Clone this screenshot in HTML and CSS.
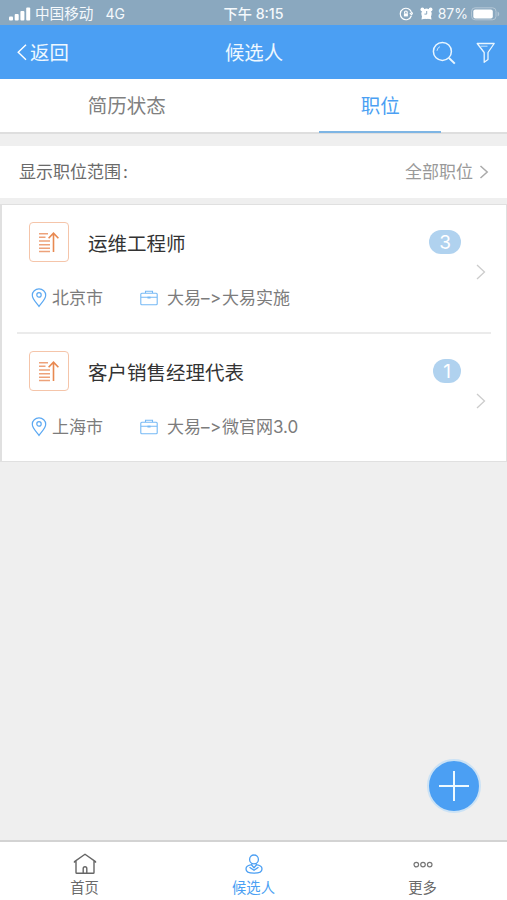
FILE: index.html
```html
<!DOCTYPE html>
<html lang="zh-CN">
<head>
<meta charset="utf-8">
<meta name="viewport" content="width=device-width, initial-scale=1">
<title>候选人</title>
<link rel="stylesheet" href="styles.css">
</head>
<body>
<div class="app">
  <div class="status">
    <div class="status-left">
      <svg class="signal" width="22" height="14" viewBox="0 0 22 14" fill="#fff"><rect x="0" y="9.5" width="4" height="4" rx="1"/><rect x="5.7" y="7" width="4" height="6.5" rx="1"/><rect x="11.4" y="4" width="4" height="9.5" rx="1"/><rect x="17.2" y="0.5" width="4" height="13" rx="1"/></svg>
      <span class="carrier">中国移动</span><span class="network">4G</span>
    </div>
    <div class="status-time">下午 8:15</div>
    <div class="status-right">
      <svg width="14" height="14" viewBox="0 0 14 14" fill="none" stroke="#fff" stroke-width="1.2"><path d="M12.4 8.8A5.7 5.7 0 1 1 12.6 6M10.8 6.2l1.9 1.4 1-2"/><rect x="4.9" y="6.4" width="4" height="3" fill="#fff" stroke="none"/><path d="M5.6 6.5V5.3a1.3 1.3 0 0 1 2.6 0v1.2"/></svg>
      <svg class="alarm" width="13" height="13" viewBox="0 0 13 13"><g fill="#fff"><circle cx="6.5" cy="6.7" r="5.2"/><circle cx="2.4" cy="2.4" r="1.9"/><circle cx="10.6" cy="2.4" r="1.9"/><path d="M1.5 12.6l.6-4 3.4 3zM11.5 12.6l-.6-4-3.4 3z"/></g><path d="M6.7 4v3.1H4.4" fill="none" stroke="#8aa8bf" stroke-width="1"/></svg>
      <span class="percent">87%</span>
      <svg class="battery" width="29" height="14" viewBox="0 0 29 14"><rect x=".6" y=".8" width="24.4" height="12" rx="3.5" fill="none" stroke="#b4c7d6"/><rect x="2.3" y="2.4" width="19.5" height="9" rx="2" fill="#fff"/><path d="M26.6 4.5c2.2 1 2.2 4 0 5z" fill="#b4c7d6"/></svg>
    </div>
  </div>
  <header class="header">
    <a class="back"><svg width="10" height="17" viewBox="0 0 10 17" fill="none" stroke="#fff" stroke-width="1.4"><path d="M9 .8L1.2 8.3 9 15.8"/></svg><span>返回</span></a>
    <h1>候选人</h1>
    <div class="actions">
      <svg width="24" height="24" viewBox="0 0 24 24" fill="none" stroke="#e9f6ff" stroke-width="1.5"><circle cx="10.4" cy="10.4" r="9"/><path d="M5 9.8a5 5 0 0 1 3-4.2" stroke-width=".8"/><path d="M17 17l5.8 5.6" stroke-width="2"/></svg>
      <svg class="filter" width="20" height="22" viewBox="0 0 20 22" fill="none" stroke="#e9f6ff" stroke-width="1.3" stroke-linejoin="round"><path d="M1.2 1.5h17l-6.2 9v7l-3.8 2.8v-9.8z"/><path d="M4.5 4.2h7" stroke-width=".8"/></svg>
    </div>
  </header>
  <nav class="tabs">
    <a class="tab"><span>简历状态</span></a>
    <a class="tab active"><span>职位</span></a>
  </nav>
  <div class="scope">
    <span>显示职位范围<span class="colon">:</span></span>
    <span class="scope-value">全部职位<svg width="10" height="14" viewBox="0 0 10 14" fill="none" stroke="#aaa" stroke-width="1.5"><path d="M1.5 1l6.7 6-6.7 6"/></svg></span>
  </div>
  <main class="jobs">
    <article class="job">
      <div class="job-icon"><svg width="22" height="22" viewBox="0 0 22 22" fill="none" stroke="#eda27a" stroke-width="1.6"><path d="M1 2.7h9M1 6.3h6.5M1 10h11M1 13.8h11M1 17.3h11M1 20.5h11"/><path d="M15.5 21V2M10.6 7.3l4.9-5.2 4.9 5.2" stroke="#e88951"/></svg></div>
      <h2>运维工程师</h2>
      <span class="badge wide">3</span>
      <div class="meta">
        <svg class="pin" width="16" height="20" viewBox="0 0 16 20" fill="none" stroke="#5ba8f2" stroke-width="1.2"><path d="M8 18.4C5.5 14.8 1.3 11.2 1.3 7.3a6.7 6.4 0 0 1 13.4 0C14.7 11.2 10.5 14.8 8 18.4z"/><circle cx="8" cy="6.9" r="2.2"/></svg>
        <span class="city">北京市</span>
        <svg class="bag" width="18" height="16" viewBox="0 0 18 16" fill="none" stroke="#76b9f5" stroke-width="1.1"><rect x=".8" y="3.2" width="16.4" height="11.6" rx="1"/><path d="M5.5 3V1.2h7V3M1 7.2h6.7M10.3 7.2H17M8 7h2v1H8z"/></svg>
        <span>大易<span class="arrow">–&gt;</span>大易实施</span>
      </div>
      <svg class="chevron" width="10" height="16" viewBox="0 0 10 16" fill="none" stroke="#ccc" stroke-width="1.3"><path d="M1 1l7.5 7L1 15"/></svg>
    </article>
    <article class="job">
      <div class="job-icon"><svg width="22" height="22" viewBox="0 0 22 22" fill="none" stroke="#eda27a" stroke-width="1.6"><path d="M1 2.7h9M1 6.3h6.5M1 10h11M1 13.8h11M1 17.3h11M1 20.5h11"/><path d="M15.5 21V2M10.6 7.3l4.9-5.2 4.9 5.2" stroke="#e88951"/></svg></div>
      <h2>客户销售经理代表</h2>
      <span class="badge">1</span>
      <div class="meta">
        <svg class="pin" width="16" height="20" viewBox="0 0 16 20" fill="none" stroke="#5ba8f2" stroke-width="1.2"><path d="M8 18.4C5.5 14.8 1.3 11.2 1.3 7.3a6.7 6.4 0 0 1 13.4 0C14.7 11.2 10.5 14.8 8 18.4z"/><circle cx="8" cy="6.9" r="2.2"/></svg>
        <span class="city">上海市</span>
        <svg class="bag" width="18" height="16" viewBox="0 0 18 16" fill="none" stroke="#76b9f5" stroke-width="1.1"><rect x=".8" y="3.2" width="16.4" height="11.6" rx="1"/><path d="M5.5 3V1.2h7V3M1 7.2h6.7M10.3 7.2H17M8 7h2v1H8z"/></svg>
        <span>大易<span class="arrow">–&gt;</span>微官网3.0</span>
      </div>
      <svg class="chevron" width="10" height="16" viewBox="0 0 10 16" fill="none" stroke="#ccc" stroke-width="1.3"><path d="M1 1l7.5 7L1 15"/></svg>
    </article>
  </main>
  <button class="add" aria-label="添加"><svg width="30" height="30" viewBox="0 0 30 30" fill="none" stroke="#eefaff" stroke-width="2"><path d="M15 0v30M0 15h30"/></svg></button>
  <footer class="bottom">
    <a class="item"><svg width="24" height="22" viewBox="0 0 24 22" fill="none" stroke="#666" stroke-width="1.4" stroke-linejoin="round"><path d="M1.5 9.8V8.6L12 1.2l10.5 7.4v1.2M3 8v11.5q0 .8.8.8h16.4q.8 0 .8-.8V8"/><path d="M10.2 20v-4.5a1.7 1.7 0 0 1 3.6 0V20"/></svg><span>首页</span></a>
    <a class="item active"><svg width="18" height="22" viewBox="0 0 18 22" fill="none" stroke="#4b9ff3" stroke-width="1.3"><circle cx="9" cy="6.4" r="4.4"/><path d="M6.8 10.2v2L9 14.7l2.2-2.5v-2M6.8 11.7C2.5 12.3 1 14 1 16c0 2.5 3.3 4.2 8 4.2s8-1.7 8-4.2c0-2-1.5-3.7-5.8-4.3M4.5 14.2L9 17.3l4.5-3.1"/></svg><span>候选人</span></a>
    <a class="item"><svg width="20" height="22" viewBox="0 0 20 22" fill="none" stroke="#777" stroke-width="1.2"><circle cx="3.3" cy="11.6" r="2.3"/><circle cx="10" cy="11.6" r="2.3"/><circle cx="16.7" cy="11.6" r="2.3"/></svg><span>更多</span></a>
  </footer>
</div>
</body>
</html>
```

FILE: styles.css
```css
* { box-sizing: border-box; }
body {
  margin: 0;
  background: #efefef;
  font-family: Inter, "Noto Sans CJK SC", sans-serif;
  color: #6a6a6a;
}
svg { display: block; flex: none; }
h1, h2 { margin: 0; font-weight: 400; }
.app { position: relative; display: flex; flex-direction: column; height: 900px; overflow: hidden; }

.status {
  display: grid;
  grid-template-columns: 1fr auto 1fr;
  align-items: center;
  height: 25px;
  padding: 2px 7px 0 9px;
  background: #8aa8bf;
  color: #f5f9fc;
  font-size: 14.6px;
  line-height: 22px;
}
.status-left, .status-right { display: flex; align-items: center; }
.carrier { margin-left: 4px; }
.network { margin-left: 12px; font-size: 14px; }
.status-time { font-weight: 500; font-size: 14.2px; margin-right: 2px; }
.status-right { justify-content: flex-end; }
.alarm { margin-left: 7px; }
.percent { margin-left: 5px; font-size: 14px; }
.battery { margin-left: 3px; }

.header {
  display: grid;
  grid-template-columns: 1fr auto 1fr;
  align-items: center;
  height: 54px;
  padding: 0 11px 0 17px;
  background: #4b9ff3;
  color: #eef8ff;
}
.header h1 { padding-top: 1px; margin-right: 5px; font-size: 19.4px; line-height: 28px; }
.back { display: flex; align-items: center; gap: 3px; font-size: 19.4px; line-height: 28px; }
.back span { padding-top: 2px; }
.actions { display: flex; justify-content: flex-end; align-items: center; padding-top: 2px; }
.filter { margin-left: 20px; }

.tabs { display: flex; height: 55px; background: #fff; border-bottom: 2px solid #dedede; }
.tab { flex: 1; display: flex; justify-content: center; font-size: 19.5px; line-height: 55px; color: #808080; }
.tab.active { color: #4b9ff3; }
.tab.active span { width: 122px; height: 54px; text-align: center; border-bottom: 2px solid #7eb5e4; }

.scope {
  display: flex;
  justify-content: space-between;
  height: 52px;
  margin-top: 12px;
  padding: 0 18px 0 19px;
  background: #fff;
  font-size: 17px;
  line-height: 53px;
}
.colon { margin-left: 2px; }
.scope-value { display: flex; align-items: center; gap: 6px; color: #999; }

.jobs { margin-top: 6px; border: 1px solid #e0e0e0; border-width: 1px 1px 1px 2px; background: #fff; }
.job {
  display: grid;
  grid-template-columns: 40px 1fr auto 30px;
  grid-template-rows: 40px 71px;
  align-items: center;
  margin: 0 15px;
  padding: 17px 0 0 12px;
  height: 128px;
}
.job + .job { border-top: 2px solid #ebebeb; margin-top: -1px; height: 129px; }
.job-icon {
  display: grid;
  place-items: center;
  width: 40px;
  height: 40px;
  border: 1px solid #f5c5aa;
  border-radius: 4px;
}
.job h2 { margin: 4px 0 0 19px; font-size: 19.5px; line-height: 28px; color: #333; }
.badge {
  width: 28px;
  height: 24px;
  border-radius: 12px;
  background: #b0d2ef;
  color: #fff;
  font-size: 19px;
  line-height: 25px;
  text-align: center;
}
.badge.wide { width: 32px; }
.meta {
  grid-column: 1 / 4;
  grid-row: 2;
  display: flex;
  align-items: center;
  padding-left: 2px;
  font-size: 17px;
  line-height: 26px;
  color: #7c7c7c;
}
.city { width: 88px; margin-left: 5px; }
.bag { margin-right: 9px; }
.arrow { letter-spacing: .6px; }
.chevron { grid-column: 4; grid-row: 1 / 3; align-self: start; justify-self: end; margin: 41.5px 5px 0 0; }

.add {
  position: absolute;
  left: 427px;
  top: 759px;
  display: grid;
  place-items: center;
  width: 54px;
  height: 54px;
  padding: 0;
  border: 2px solid #cbe2f5;
  border-radius: 50%;
  background: #4b9ff3;
}

.bottom { display: flex; height: 60px; margin-top: auto; border-top: 2px solid #d3d3d3; background: #fff; }
.item { flex: 1; display: flex; flex-direction: column; align-items: center; padding-top: 11px; font-size: 14.3px; line-height: 22px; }
.item span { margin-top: 2px; }
.item.active { color: #4b9ff3; }
```
